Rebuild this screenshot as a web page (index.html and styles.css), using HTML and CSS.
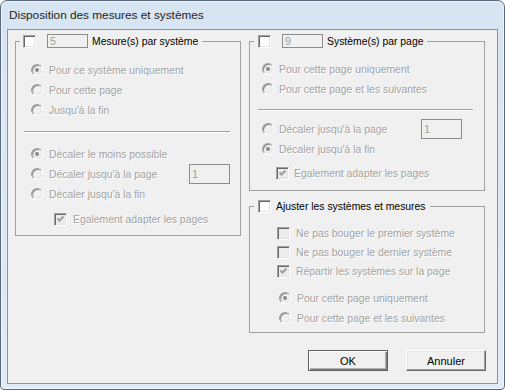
FILE: index.html
```html
<!DOCTYPE html>
<html lang="fr">
<head>
  <meta charset="UTF-8">
  <title>Disposition des mesures et systèmes</title>
  <link rel="stylesheet" href="styles.css">
</head>
<body>
  <div class="window">
    <div class="titlebar">Disposition des mesures et systèmes</div>
    <div class="client">
      <div class="columns">
        <!-- Mesures par système -->
        <fieldset class="group group-left">
          <legend class="legend">
            <span class="check"></span>
            <span class="edit edit-legend">5</span>
            <span class="legend-label">Mesure(s) par système</span>
          </legend>
          <div class="body body-left">
            <div class="row"><span class="radio on"></span><span class="dis">Pour ce système uniquement</span></div>
            <div class="row"><span class="radio"></span><span class="dis">Pour cette page</span></div>
            <div class="row"><span class="radio"></span><span class="dis">Jusqu'à la fin</span></div>
            <div class="separator sep-left"></div>
            <div class="row"><span class="radio on"></span><span class="dis">Décaler le moins possible</span></div>
            <div class="row"><span class="radio"></span><span class="dis">Décaler jusqu'à la page</span><span class="edit edit-tall">1</span></div>
            <div class="row"><span class="radio"></span><span class="dis">Décaler jusqu'à la fin</span></div>
            <div class="row check-row"><span class="check disabled"><svg width="7" height="7" viewBox="0 0 7 7"><polyline points="0.5,2.5 2.5,4.5 6.5,0.5" fill="none" stroke="#a0a0a0" stroke-width="2"/></svg></span><span class="dis">Egalement adapter les pages</span></div>
          </div>
        </fieldset>

        <div class="right-col">
          <!-- Systèmes par page -->
          <fieldset class="group">
            <legend class="legend legend-right">
              <span class="check"></span>
              <span class="edit edit-legend">9</span>
              <span class="legend-label">Système(s) par page</span>
            </legend>
            <div class="body body-right">
              <div class="row"><span class="radio on"></span><span class="dis">Pour cette page uniquement</span></div>
              <div class="row"><span class="radio"></span><span class="dis">Pour cette page et les suivantes</span></div>
              <div class="separator sep-right"></div>
              <div class="row"><span class="radio"></span><span class="dis">Décaler jusqu'à la page</span><span class="edit edit-tall">1</span></div>
              <div class="row"><span class="radio on"></span><span class="dis">Décaler jusqu'à la fin</span></div>
              <div class="row check-row"><span class="check disabled"><svg width="7" height="7" viewBox="0 0 7 7"><polyline points="0.5,2.5 2.5,4.5 6.5,0.5" fill="none" stroke="#a0a0a0" stroke-width="2"/></svg></span><span class="dis">Egalement adapter les pages</span></div>
            </div>
          </fieldset>

          <!-- Ajuster -->
          <fieldset class="group group-adjust">
            <legend class="legend legend-right">
              <span class="check"></span>
              <span class="legend-label label-near">Ajuster les systèmes et mesures</span>
            </legend>
            <div class="body body-adjust">
              <div class="row short"><span class="check disabled"></span><span class="dis">Ne pas bouger le premier système</span></div>
              <div class="row short"><span class="check disabled"></span><span class="dis">Ne pas bouger le dernier système</span></div>
              <div class="row short"><span class="check disabled"><svg width="7" height="7" viewBox="0 0 7 7"><polyline points="0.5,2.5 2.5,4.5 6.5,0.5" fill="none" stroke="#a0a0a0" stroke-width="2"/></svg></span><span class="dis">Répartir les systèmes sur la page</span></div>
              <div class="row radio-first"><span class="radio on"></span><span class="dis">Pour cette page uniquement</span></div>
              <div class="row"><span class="radio"></span><span class="dis">Pour cette page et les suivantes</span></div>
            </div>
          </fieldset>
        </div>
      </div>

      <div class="buttons">
        <button class="button default">OK</button>
        <button class="button">Annuler</button>
      </div>
    </div>
  </div>
</body>
</html>
```

FILE: styles.css
```css
* {
  box-sizing: border-box;
}

body {
  margin: 0;
  background-color: #ffffff;
  font-family: "Liberation Sans", Arial, sans-serif;
  font-size: 10.4px;
  color: #000;
}

.window {
  width: 505px;
  height: 390px;
  padding: 0 6px 5px;
  border: 1px solid #5a6a7c;
  border-radius: 7px 7px 4px 4px;
  background: linear-gradient(#d7e4f2, #e2ebf6);
  box-shadow: inset 0 0 0 1px rgba(255, 255, 255, 0.6);
}

.titlebar {
  height: 28px;
  line-height: 28px;
  padding-left: 2px;
  font-size: 11.8px;
  color: #1e1e1e;
}

.client {
  height: 355px;
  border: 1px solid #8595a8;
  background-color: #f0f0f0;
}

.columns {
  display: flex;
  align-items: flex-start;
  gap: 8px;
  padding: 4px 12px 0 7px;
}

.group {
  margin: 0;
  padding: 0 4px;
  border: 1px solid #a0a0a0;
  min-width: 0;
}

.group-left {
  width: 226px;
}

.right-col {
  width: 236px;
  display: flex;
  flex-direction: column;
}

.group-adjust {
  margin-top: 8px;
}

.legend {
  display: flex;
  align-items: center;
  height: 14px;
  padding: 0 4px 0 3px;
}

.legend-right {
  padding-left: 4px;
}

.legend-label {
  margin-left: 4px;
  white-space: nowrap;
}

.label-near {
  margin-left: 5px;
}

.check {
  flex: none;
  display: flex;
  align-items: center;
  justify-content: center;
  width: 13px;
  height: 13px;
  border: 1px solid;
  border-color: #a0a0a0 #ffffff #ffffff #a0a0a0;
  box-shadow: inset 1px 1px 0 #696969, inset -1px -1px 0 #e3e3e3;
  background-color: #ffffff;
}

.check.disabled {
  background-color: #ececec;
}

.radio {
  flex: none;
  display: flex;
  align-items: center;
  justify-content: center;
  width: 12px;
  height: 12px;
  border: 1px solid;
  border-color: #a0a0a0 #ffffff #ffffff #a0a0a0;
  border-radius: 50%;
  box-shadow: inset 1px 1px 0 #8a8a8a, inset -1px -1px 0 #e3e3e3;
  background-color: #f0f0f0;
}

.radio.on::after {
  content: "";
  width: 4px;
  height: 4px;
  border-radius: 50%;
  background-color: #8a8a8a;
}

.edit {
  flex: none;
  width: 41px;
  height: 14px;
  line-height: 12px;
  padding-left: 2px;
  border: 1px solid #8c8c8c;
  color: #a0a0a0;
  font-size: 11px;
}

.edit-legend {
  margin-left: 11px;
}

.edit-tall {
  height: 20px;
  line-height: 18px;
  margin-left: auto;
}

.dis {
  color: #a3a3a3;
  text-shadow: 1px 1px 0 #ffffff;
  white-space: nowrap;
}

.row {
  display: flex;
  align-items: center;
  gap: 6px;
  height: 20px;
}

.row.short {
  height: 19px;
}

.separator {
  height: 2px;
  border-top: 1px solid #a0a0a0;
  border-bottom: 1px solid #ffffff;
}

/* left group */
.body-left {
  padding: 12px 6px 6px 4px;
}

.body-left .radio {
  margin-left: 7px;
}

.sep-left {
  margin: 11px 0;
}

.body-left .check-row {
  margin-top: 5px;
  padding-left: 30px;
}

/* right top group */
.body-right {
  padding: 11px 7px 7px 4px;
}

.body-right .row {
  gap: 5px;
}

.body-right .radio {
  margin-left: 4px;
}

.body-right .edit-tall {
  margin-right: 11px;
}

.sep-right {
  margin: 10px 0 8px;
}

.body-right .check-row {
  margin-top: 4px;
  padding-left: 18px;
}

/* adjust group */
.body-adjust {
  padding: 11px 7px 4px 4px;
}

.body-adjust .check {
  margin-left: 19px;
}

.body-adjust .radio {
  margin-left: 21px;
}

.radio-first {
  margin-top: 7px;
}

.buttons {
  display: flex;
  justify-content: flex-end;
  gap: 18px;
  padding: 17px 11px 0 0;
}

.button {
  width: 80px;
  height: 21px;
  padding: 0;
  font-family: "Liberation Sans", Arial, sans-serif;
  font-size: 11px;
  color: #000;
  background-color: #f0f0f0;
  border: 1px solid;
  border-color: #ffffff #696969 #696969 #ffffff;
  box-shadow: inset -1px -1px 0 #a0a0a0, inset 1px 1px 0 #e3e3e3;
}

.button.default {
  border-color: #606060;
  box-shadow: inset 1px 1px 0 #ffffff, inset -1px -1px 0 #808080, inset -2px -2px 0 #b0b0b0;
}
```
